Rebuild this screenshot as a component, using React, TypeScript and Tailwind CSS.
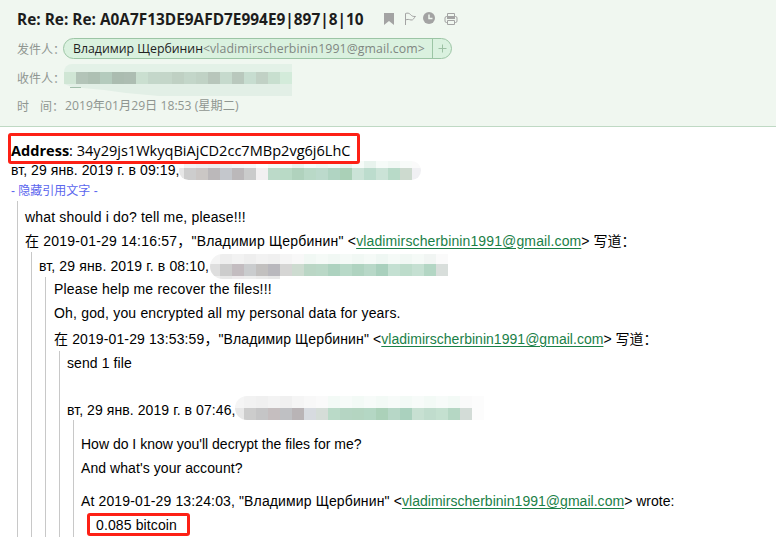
import React from "react";

type Row = { h: number; cells: string[] };

function Mosaic({ rows, cell = 12, first = 12, className = "" }: { rows: Row[]; cell?: number; first?: number; className?: string }) {
  return (
    <span className={"flex shrink-0 flex-col overflow-hidden " + className}>
      {rows.map((r, i) => (
        <span key={i} className="flex shrink-0" style={{ height: r.h }}>
          {r.cells.map((c, j) => (
            <span key={j} className="h-full shrink-0" style={{ width: j === 0 ? first : cell, backgroundColor: c }} />
          ))}
        </span>
      ))}
    </span>
  );
}

function Line({ children, className = "" }: { children?: React.ReactNode; className?: string }) {
  return <div className={"flex items-center whitespace-pre " + className}>{children}</div>;
}

function Quote({ children, className = "" }: { children: React.ReactNode; className?: string }) {
  return <div className={"border-l border-[#c8c8c8] " + className}>{children}</div>;
}

function Mail({ className = "tracking-[0.03px]" }: { className?: string }) {
  return <a className={"text-[#1a8047] underline underline-offset-2 " + className}>vladimirscherbinin1991@gmail.com</a>;
}

const W = "transparent";
const label = "flex shrink-0 whitespace-nowrap font-['Noto_Sans_CJK_SC',sans-serif] text-[12px] text-[#8f9691] ";

export default function App() {
  return (
    <div className="h-[537px] w-[776px] overflow-hidden bg-white font-['Liberation_Sans','Noto_Sans_CJK_SC',sans-serif] text-[14px] leading-6 text-black">
      <header className="flex h-[127px] flex-col border-b border-[#bfd9c4] bg-[#f0f7f0] pl-[17px]">
        <div className="flex h-[38px] items-center whitespace-pre">
          <h1 className="w-[366px] pt-px font-['Open_Sans',sans-serif] text-[15.400px] font-bold text-[#1c1c1c]">Re: Re: Re: A0A7F13DE9AFD7E994E9|897|8|10</h1>
          <svg width="76" height="16" viewBox="0 0 76 16" fill="none">
            <path d="M1 2h10v12l-5-4-5 4z" fill="#a3a3a3" />
            <path d="M22.500 14V2.500c2-.7 3.500-.5 5 1 1.200 1.500 2.500 2.200 5 2-1.500 1-2 4-4.500 3.500-2-.5-3.500-1-5.500 0" stroke="#a3a3a3" />
            <circle cx="46" cy="7" r="6" fill="#a3a3a3" />
            <path d="M46 3.500V7.500h3.500" stroke="#f0f7f0" strokeWidth="1.500" />
            <path d="M64.500 5V2.500h7V5M64.500 11.500h-1a1.500 1.500 0 0 1-1.500-1.500V7a1.500 1.500 0 0 1 1.500-1.500h9A1.500 1.500 0 0 1 74 7v3a1.500 1.500 0 0 1-1.500 1.500h-1M64.500 9.500h7v4h-7z" stroke="#a3a3a3" />
            <path d="M64 6h8v2h-8z" fill="#a3a3a3" />
          </svg>
        </div>
        <div className="flex h-[21px] items-center whitespace-pre">
          <span className={label + "w-[46px]"}>发件人：</span>
          <div className="flex h-[21px] w-[389px] items-stretch rounded-full border border-[#9cc5a5] bg-[#daf1df] font-['Open_Sans',sans-serif] text-[12.300px] leading-[19px]">
            <div className="w-[368px] shrink-0 pl-[9px]">
              <span className="text-[#222]">Владимир Щербинин</span>
              <span className="tracking-[0.100px] text-[#808782]">&lt;vladimirscherbinin1991@gmail.com&gt;</span>
            </div>
            <div className="flex flex-1 items-center justify-center border-l border-[#9cc5a5]">
              <svg width="9" height="9" viewBox="0 0 9 9"><path d="M4.500 .5v8M.5 4.500h8" stroke="#9cc0a3" /></svg>
            </div>
          </div>
        </div>
        <div className="flex h-[38px] items-center">
          <span className={label + "w-[47px]"}>收件人：</span>
          <div className="relative mt-[4px]">
            <Mosaic
              className="h-8 w-[228px] rounded-tl-lg [clip-path:polygon(0_0,228px_0,228px_32px,95px_32px,62px_29px,40px_26px,8px_23px,0_20px)]"
              rows={[
                { h: 8, cells: Array(19).fill("#e3f1e7") },
                { h: 12, cells: ["#d0e6d5", "#b3c4b8", "#aec0b3", "#b4cbbd", "#abbcb0", "#adbdb2", "#cadfd0", "#c4d7ca", "#c4d6c9", "#bfd0c3", "#c3d6c9", "#c0d2c5", "#b8c6bb", "#c6dacd", "#b9c8bd", "#c7ddd0", "#c1d1c5", "#c8dfcf", "#d3ebda"] },
                { h: 12, cells: Array(19).fill("#e2efe6") },
              ]}
            />
            <span className="absolute left-[6px] top-[23px] h-px w-[11px] bg-[#a3bfac]" />
          </div>
        </div>
        <div className="flex h-[18px] items-center whitespace-pre text-[#8f9691]">
          <span className={label + "w-[48px] gap-[11px]"}><span>时</span><span>间：</span></span>
          <span className="font-['Open_Sans','Noto_Sans_CJK_SC',sans-serif] text-[12.200px]">2019年01月29日 18:53 (星期二)</span>
        </div>
      </header>

      <main className="pl-[8px] pt-[6px]">
        <div className="relative z-10 flex h-[31px] w-[352px] items-center whitespace-pre rounded-[3px] border-[3px] border-[#fd2015] pt-[3px] font-['Open_Sans',sans-serif] text-[14.550px]">
          <b>Address</b>: 34y29js1WkyqBiAjCD2cc7MBp2vg6j6LhC
        </div>
        <Line className="h-[14px] pl-[3px]">
          <span className="-mt-[2px] w-[168px] shrink-0 tracking-[0.080px]">вт, 29 янв. 2019 г. в 09:19,</span>
          <Mosaic
            className="-mt-[1px] h-[19px] w-[242px] rounded-full"
            first={5}
            rows={[
              { h: 7, cells: [W, "#f3f3f3", "#f0f0f0", "#eeeeee", "#f2f2f2", "#f6f6f6", "#f8f8f8", W, "#f6fbf8", "#f6fbf8", "#eaf4ee", "#f6fbf8", "#f1f8f4", "#f6fbf8", "#eaf4ee", "#f6fbf8", "#e8f3ed", "#f6fbf8", "#f1f8f4", "#f8fbf9", "#fafafa"] },
              { h: 12, cells: ["#e6e6e6", "#cdcdcd", "#cbc7c5", "#bbb8ba", "#c4c7cc", "#bbb8ba", "#cacbcb", "#f2f0f1", "#bcdac9", "#b9dac6", "#b0d2bd", "#b9d9c7", "#bcdacc", "#b0d4c2", "#aad0b7", "#cbe3d7", "#bcdccd", "#cbe3d7", "#b8dac8", "#cddacf", "#f0f0f3"] },
            ]}
          />
        </Line>
        <Line className="h-[23px] pl-[3px] pt-[2px] text-[12px] text-[#5b66ee]">- 隐藏引用文字 -</Line>

        <Quote className="ml-[9px] pl-[7px] pt-1">
          <Line className="h-6 tracking-[0.17px]">what should i do? tell me, please!!!</Line>
          <Line className="h-[23px]"><span className="tracking-[0.21px]">在 2019-01-29 14:16:57，"Владимир Щербинин" &lt;</span><Mail className="tracking-[0.125px]" />&gt; 写道：</Line>
          <Quote className="ml-[6px] pl-[7px] pt-[2px]">
            <Line className="h-[23px]">
              <span className="w-[171px] shrink-0 tracking-[0.140px]">вт, 29 янв. 2019 г. в 08:10,</span>
              <Mosaic
                className="mt-[2px] h-[25px] w-[238px] rounded-l-full rounded-tr-xl"
                first={10}
                rows={[
                  { h: 10, cells: ["#f4f4f4", "#eeeeee", "#f2f2f2", "#eeeeee", "#f2f2f2", "#f0f0f0", "#f5f5f5", "#f8f8f8", "#f1f8f4", "#f5faf7", "#f1f8f4", "#f5faf7", "#f1f8f4", "#f5faf7", "#eff7f3", "#f5faf7", "#f1f8f4", "#f5faf7", "#f1f5f3", "#fafafa"] },
                  { h: 12, cells: ["#dedede", "#cccccc", "#c3bcc0", "#caccce", "#c2c0bf", "#b9b8bd", "#d5d5d4", "#cddbd0", "#bad6c5", "#bad8c7", "#add2bf", "#b8d9c8", "#afd3c0", "#b8d8c8", "#a9d0bd", "#c4e0d2", "#bddccb", "#c5e0d2", "#b3d6c4", "#d8dedb"] },
                  { h: 3, cells: ["#eeeeee", "#e8e8e8", "#eeebed", "#eeeeee", "#ebebeb", "#e8e8e8", W] },
                ]}
              />
            </Line>
            <Quote className="ml-[6px] pl-[8px]">
              <Line className="h-6 tracking-[0.2px]">Please help me recover the files!!!</Line>
              <Line className="h-6 tracking-[0.18px]">Oh, god, you encrypted all my personal data for years.</Line>
              <Line className="h-[26px] pt-[2px]"><span className="tracking-[0.12px]">在 2019-01-29 13:53:59，"Владимир Щербинин" &lt;</span><Mail />&gt; 写道：</Line>
              <Quote className="ml-[5px] pl-[7px]">
                <Line className="h-6 tracking-[0.09px]">send 1 file</Line>
                <Line className="h-[23px]" />
                <Line className="h-[22px]">
                  <span className="mt-[2px] w-[168px] shrink-0 tracking-[0.080px]">вт, 29 янв. 2019 г. в 07:46,</span>
                  <Mosaic
                    className="-mt-[2px] h-[24px] w-[249px] rounded-l-full rounded-tr-2xl"
                    first={9}
                    rows={[
                      { h: 12, cells: ["#f5f5f5", "#f2f2f2", "#f0f0f0", "#f3f3f3", "#f0f0f0", "#f5f5f5", "#f8f8f8", "#fafafa", "#f3faf6", "#f7fbf9", "#f3faf6", "#f7fbf9", "#f3faf6", "#f7fbf9", "#f3faf6", "#f7fbf9", "#f3faf6", "#f7fbf9", "#f3faf6", "#fafafa", "#fcfcfc"] },
                      { h: 12, cells: ["#e8e8e8", "#cccccc", "#c5c5c6", "#c5bebf", "#bfc0c3", "#b9b4b6", "#d7dbe0", "#d5ddd8", "#badac8", "#b5d5c3", "#b4d5c1", "#b4d7c4", "#abd1b9", "#b7d7c7", "#aad1be", "#c7e0d2", "#c0dccd", "#c4e0d0", "#b5d7c4", "#d3dcd7", "#fcfcfc"] },
                    ]}
                  />
                </Line>
                <Quote className="ml-[6px] h-[117px] pl-[7px] pt-3">
                  <Line className="h-6">How do I know you'll decrypt the files for me?</Line>
                  <Line className="h-6 tracking-[0.07px]">And what's your account?</Line>
                  <Line className="mt-[9px] h-6"><span className="tracking-[0.130px]">At 2019-01-29 13:24:03, "Владимир Щербинин" &lt;</span><Mail />&gt; wrote:</Line>
                  <Line className="ml-[6px] h-[23px] w-[103px] rounded-[3px] border-[3px] border-[#fd2015] pl-[6px] tracking-[0.120px]">0.085 bitcoin</Line>
                </Quote>
              </Quote>
            </Quote>
          </Quote>
        </Quote>
      </main>
    </div>
  );
}
